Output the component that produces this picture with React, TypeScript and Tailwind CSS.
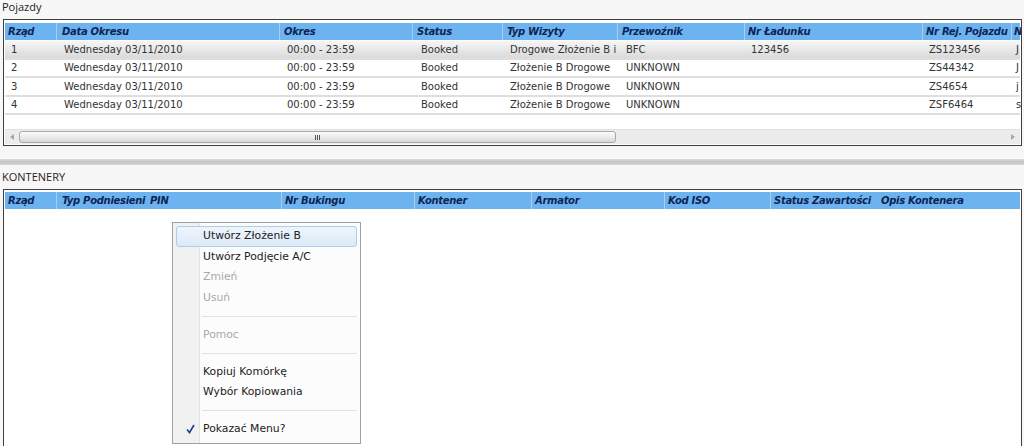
import React from 'react';

const cellFont = { fontFamily: '"DejaVu Sans", Verdana, sans-serif' };
const labelFont = { fontFamily: '"Open Sans", "Noto Sans", sans-serif' };

const topCols = [
  { label: 'Rząd', w: 'w-[52px]', hp: 'pl-[3px]', cp: 'pl-[6px]' },
  { label: 'Data Okresu', w: 'w-[223px]', hp: 'pl-[5px]', cp: 'pl-[7px]' },
  { label: 'Okres', w: 'w-[133px]', hp: 'pl-[4px]', cp: 'pl-[7px]' },
  { label: 'Status', w: 'w-[90px]', hp: 'pl-[4px]', cp: 'pl-[8px]' },
  { label: 'Typ Wizyty', w: 'w-[115px]', hp: 'pl-[4px]', cp: 'pl-[7px]' },
  { label: 'Przewoźnik', w: 'w-[127px]', hp: 'pl-[4px]', cp: 'pl-[8px]' },
  { label: 'Nr Ładunku', w: 'w-[178px]', hp: 'pl-[3px]', cp: 'pl-[6px]' },
  { label: 'Nr Rej. Pojazdu', w: 'w-[89px]', hp: 'pl-[3px]', cp: 'pl-[6px]' },
  { label: 'N', w: 'w-[9px]', hp: 'pl-[2px]', cp: 'pl-[4px]' },
];

const rows = [
  ['1', 'Wednesday 03/11/2010', '00:00 - 23:59', 'Booked', 'Drogowe Złożenie B i', 'BFC', '123456', 'ZS123456', 'J'],
  ['2', 'Wednesday 03/11/2010', '00:00 - 23:59', 'Booked', 'Złożenie B Drogowe', 'UNKNOWN', '', 'ZS44342', 'J'],
  ['3', 'Wednesday 03/11/2010', '00:00 - 23:59', 'Booked', 'Złożenie B Drogowe', 'UNKNOWN', '', 'ZS4654', 'j'],
  ['4', 'Wednesday 03/11/2010', '00:00 - 23:59', 'Booked', 'Złożenie B Drogowe', 'UNKNOWN', '', 'ZSF6464', 's'],
];

const bottomCols = [
  { label: 'Rząd', w: 'w-[52px]', hp: 'pl-[3px]', sep: true },
  { label: 'Typ Podniesieni', w: 'w-[90px]', hp: 'pl-[5px]', sep: false },
  { label: 'PIN', w: 'w-[135px]', hp: 'pl-[3px]', sep: true },
  { label: 'Nr Bukingu', w: 'w-[133px]', hp: 'pl-[3px]', sep: true },
  { label: 'Kontener', w: 'w-[117px]', hp: 'pl-[3px]', sep: true },
  { label: 'Armator', w: 'w-[133px]', hp: 'pl-[3px]', sep: true },
  { label: 'Kod ISO', w: 'w-[106px]', hp: 'pl-[3px]', sep: true },
  { label: 'Status Zawartości', w: 'w-[106px]', hp: 'pl-[3px]', sep: false },
  { label: 'Opis Kontenera', w: 'w-[143px]', hp: 'pl-[4px]', sep: false },
];

function HeaderCell({ label, w, hp, sep }: { label: string; w: string; hp: string; sep: boolean }) {
  return (
    <div
      className={`${w} ${hp} shrink-0 h-full flex items-center overflow-hidden whitespace-nowrap text-[10px] font-bold italic tracking-[-0.3px] text-[#0e2456] ${sep ? 'border-r border-[#a6d0f3]' : ''}`}
    >
      {label}
    </div>
  );
}

function Arrow({ dir }: { dir: 'left' | 'right' }) {
  return (
    <svg width="4" height="6" viewBox="0 0 4 6">
      <polygon points={dir === 'left' ? '4,0 0,3 4,6' : '0,0 4,3 0,6'} fill="#a8a8a8" />
    </svg>
  );
}

function ScrollBar() {
  return (
    <div className="h-[15px] shrink-0 flex items-stretch bg-[#ececec] border-t border-[#e0e0e0]">
      <div className="w-[13px] flex items-center justify-center">
        <Arrow dir="left" />
      </div>
      <div className="w-[597px] my-[1px] ml-[1px] rounded-[3px] border border-[#a9a9a9] bg-gradient-to-b from-[#fbfbfb] via-[#ececec] to-[#d6d6d6] flex items-center justify-center gap-[1px]">
        <div className="w-[1px] h-[5px] bg-[#555]" />
        <div className="w-[1px] h-[5px] bg-[#555]" />
        <div className="w-[1px] h-[5px] bg-[#555]" />
      </div>
      <div className="flex-1" />
      <div className="w-[14px] flex items-center justify-center">
        <Arrow dir="right" />
      </div>
    </div>
  );
}

function MenuItem({ text, disabled, active, checked }: { text: string; disabled?: boolean; active?: boolean; checked?: boolean }) {
  return (
    <div
      className={`relative h-[20.5px] mx-[3px] flex items-center rounded-[3px] border ${
        active ? 'border-[#a8cfee] bg-gradient-to-b from-[#eef5fc] to-[#dde9f6]' : 'border-transparent'
      }`}
    >
      <div className="w-[26px] h-full flex items-center justify-center">
        {checked && (
          <svg width="9" height="10" viewBox="0 0 9 10">
            <path d="M1 5.5 L3.5 8.5 L8 1" fill="none" stroke="#1d3f91" strokeWidth="1.6" />
          </svg>
        )}
      </div>
      <span className={`text-[10.8px] ${disabled ? 'text-[#a9a9a9]' : 'text-[#222]'}`}>{text}</span>
    </div>
  );
}

function MenuSep() {
  return (
    <div className="h-[16.5px] flex items-center">
      <div className="ml-[29px] mr-[3px] flex-1 h-px bg-[#e2e2e2]" />
    </div>
  );
}

export default function App() {
  return (
    <div className="relative h-[446px] w-[1024px] overflow-hidden bg-[#f7f7f7] flex flex-col" style={cellFont}>
      {/* Pojazdy */}
      <div className="h-[19px] shrink-0 pl-[2px] text-[11px] leading-[14px] text-[#222]" style={labelFont}>
        Pojazdy
      </div>
      <div className="ml-[3px] mr-[2px] h-[127px] shrink-0 border border-[#3f3f3f] bg-white px-px pt-[3px] pb-[1px] flex flex-col overflow-hidden">
        <div className="h-[17px] flex bg-[#6db3ef] shrink-0">
          {topCols.map((c, i) => (
            <HeaderCell key={i} label={c.label} w={c.w} hp={c.hp} sep={i < topCols.length - 1} />
          ))}
        </div>
        <div className="mt-px flex flex-col shrink-0">
          {rows.map((r, ri) => (
            <div
              key={ri}
              className={`h-[18.5px] shrink-0 flex border-b-2 border-[#dedede] text-[10px] text-[#333] ${
                ri === 0 ? 'bg-gradient-to-b from-[#f6f6f6] to-[#dadada]' : 'bg-white'
              }`}
            >
              {r.map((v, ci) => (
                <div
                  key={ci}
                  className={`${topCols[ci].w} ${topCols[ci].cp} shrink-0 flex items-center overflow-hidden whitespace-nowrap`}
                >
                  {v}
                </div>
              ))}
            </div>
          ))}
        </div>
        <div className="flex-1" />
        <ScrollBar />
      </div>

      {/* splitter */}
      <div className="mt-[13px] h-[6px] shrink-0 bg-gradient-to-b from-[#dcdcdc] via-[#c4c4c4] to-[#d6d6d6]" />

      {/* KONTENERY */}
      <div className="h-[24px] shrink-0 pl-[2px] flex items-center text-[11px] text-[#2a2222]" style={labelFont}>
        KONTENERY
      </div>
      <div className="ml-[3px] mr-[2px] h-[280px] shrink-0 border border-[#3f3f3f] bg-white px-px pt-[2px]">
        <div className="h-[17px] flex bg-[#6db3ef] overflow-hidden">
          {bottomCols.map((c, i) => (
            <HeaderCell key={i} label={c.label} w={c.w} hp={c.hp} sep={c.sep} />
          ))}
        </div>
      </div>

      {/* context menu */}
      <div className="absolute left-[172px] top-[222px] w-[189px] border border-[#a0a0a0] bg-[#fcfcfc] pt-[3px] pb-[3px]">
        <div className="absolute left-0 top-0 bottom-0 w-[27px] bg-[#f1f1f1] border-r border-[#e2e2e2]" />
        <div className="relative">
          <MenuItem text="Utwórz Złożenie B" active />
          <MenuItem text="Utwórz Podjęcie A/C" />
          <MenuItem text="Zmień" disabled />
          <MenuItem text="Usuń" disabled />
          <MenuSep />
          <MenuItem text="Pomoc" disabled />
          <MenuSep />
          <MenuItem text="Kopiuj Komórkę" />
          <MenuItem text="Wybór Kopiowania" />
          <MenuSep />
          <MenuItem text="Pokazać Menu?" checked />
        </div>
      </div>
    </div>
  );
}
